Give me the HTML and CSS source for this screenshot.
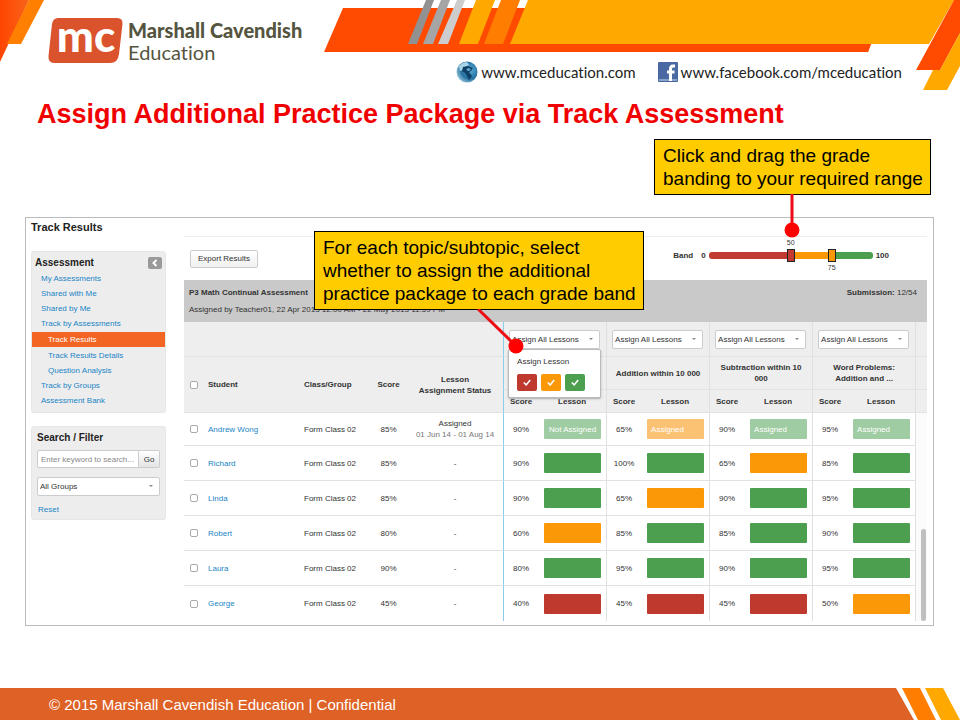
FILE: index.html
```html
<!DOCTYPE html>
<html lang="en">
<head>
<meta charset="utf-8">
<meta name="viewport" content="width=device-width, initial-scale=1">
<title>Assign Additional Practice Package via Track Assessment</title>
<link rel="stylesheet" href="styles.css">
</head>
<body>
<header class="masthead">
  <svg class="masthead-art" viewBox="0 0 960 96" preserveAspectRatio="none" aria-hidden="true">
    <defs>
      <linearGradient id="corner" x1="0" y1="0" x2="1" y2="0"><stop offset="0" stop-color="#ff4500"/><stop offset="1" stop-color="#f8641c"/></linearGradient>
    </defs>
    <path fill="url(#corner)" d="M0 0H29L0 62Z"/>
    <path fill="#ff8000" d="M29 0H44L21 44H7Z"/>
    <path fill="#ff4b00" d="M343 8H540L871 44L868 52H324Z"/>
    <path fill="#ff4b00" d="M500 44H871L868 52H500Z"/>
    <path fill="#fff" d="M460 0H530L526 8H460Z"/>
    <path fill="#919191" d="M426 0H434L417 44H408Z"/>
    <path fill="#a5a5a5" d="M441 0H450L433 44H423Z"/>
    <path fill="#cdcdcd" d="M457 0H465L448 44H438Z"/>
    <path fill="#ffa800" d="M476 0H495L478 44H459Z"/>
    <path fill="#ff7d00" d="M501 0H520L503 44H484Z"/>
    <path fill="#ffa800" d="M528 0H954L929 44H510Z"/>
    <path fill="#ff4b00" d="M954 0H960V33L940 70H916Z"/>
    <path fill="#ffa800" d="M960 33V66L947 90H923L933 70H940Z"/>
  </svg>
  <div class="brand">
    <svg class="brand-mark" viewBox="0 0 75 45" role="img" aria-label="mc">
      <path fill="#da532c" d="M10 0H69Q75 0 74.500 6L71 36Q70 45 62 45H6Q0 45 .5 38L4 6Q5 0 10 0Z"/>
      <text x="38" y="34" text-anchor="middle" class="mark-text">mc</text>
    </svg>
    <div class="brand-name"><strong>Marshall Cavendish</strong><span>Education</span></div>
  </div>
  <nav class="links" aria-label="Websites">
    <a href="#web"><svg viewBox="0 0 22 22" class="link-icon" aria-hidden="true">
      <defs><radialGradient id="globe" cx=".65" cy=".4" r=".7"><stop offset="0" stop-color="#5db1dc"/><stop offset=".6" stop-color="#246f9f"/><stop offset="1" stop-color="#9ccbe2"/></radialGradient></defs>
      <circle cx="11" cy="11" r="10.500" fill="url(#globe)"/>
      <path fill="#a9d3e6" d="M3 5Q7 1 11 1L13 4L9 6L7 9L4 10Z"/>
      <path fill="#103f66" d="M7 6L12 5L17 7L15 10L13 11L16 15L13 19L11 15L9 12L6 10Z"/>
      <path fill="#64b2d9" d="M12 7L15 8L13 10L10 9Z"/>
    </svg>www.mceducation.com</a>
    <a href="#facebook"><svg viewBox="0 0 20 20" class="link-icon fb" aria-hidden="true">
      <rect width="20" height="20" rx="1" fill="#4a69a3"/><path fill="#8ba2ca" d="M1 17H19V19H1Z"/>
      <path fill="none" stroke="#fff" stroke-width="3" d="M17 4H15Q12.500 4 12.500 7V19M9 10H16.500"/>
    </svg>www.facebook.com/mceducation</a>
  </nav>
</header>

<main class="slide">
  <h1>Assign Additional Practice Package via Track Assessment</h1>

  <section class="shot">
    <aside class="side">
      <h2>Track Results</h2>
      <nav class="panel menu" aria-label="Assessment">
        <div class="menu-head"><h3>Assessment</h3>
          <button type="button" class="collapse" aria-label="Collapse menu"><svg viewBox="0 0 8 8" aria-hidden="true"><path d="M5.500 1L2.500 4L5.500 7" fill="none" stroke="#fff" stroke-width="2"/></svg></button></div>
        <ul>
          <li><a href="#my">My Assessments</a></li>
          <li><a href="#with">Shared with Me</a></li>
          <li><a href="#by">Shared by Me</a></li>
          <li><a href="#track">Track by Assessments</a></li>
          <li class="sub active"><a href="#results" aria-current="page">Track Results</a></li>
          <li class="sub"><a href="#details">Track Results Details</a></li>
          <li class="sub"><a href="#analysis">Question Analysis</a></li>
          <li><a href="#groups">Track by Groups</a></li>
          <li><a href="#bank">Assessment Bank</a></li>
        </ul>
      </nav>
      <form class="panel filter">
        <h3><label for="keyword">Search / Filter</label></h3>
        <div class="search"><input id="keyword" type="text" placeholder="Enter keyword to search..."><button type="button">Go</button></div>
        <div class="pick"><select aria-label="Group"><option>All Groups</option></select></div>
        <a href="#reset">Reset</a>
      </form>
    </aside>

    <div class="results">
      <div class="toolbar">
        <button type="button" class="export">Export Results</button>
        <div class="band">
          <span class="band-label">Band</span><span>0</span>
          <div class="range">
            <input type="range" class="low" min="0" max="100" value="50" aria-label="Lower grade band">
            <input type="range" class="high" min="0" max="100" value="75" aria-label="Upper grade band">
            <output class="tick-low">50</output><output class="tick-high">75</output>
          </div>
          <span>100</span>
        </div>
      </div>
      <div class="summary">
        <div><strong>P3 Math Continual Assessment</strong><p>Assigned by Teacher01, 22 Apr 2013 12:00 AM - 22 May 2013 11:59 PM</p></div>
        <p><strong>Submission:</strong> 12/54</p>
      </div>
      <table>
        <colgroup><col class="c-check"><col class="c-name"><col class="c-class"><col class="c-total"><col class="c-status"><col class="c-score"><col class="c-lesson"><col class="c-score"><col class="c-lesson"><col class="c-score"><col class="c-lesson"><col class="c-score"><col class="c-lesson"><col class="c-scroll"></colgroup>
        <thead>
          <tr class="assign">
            <td colspan="5"></td>
            <td colspan="2" class="first topic"><div class="pick"><select aria-label="Assign lessons, topic 1"><option>Assign All Lessons</option></select></div>
              <div class="popup"><p>Assign Lesson</p><div class="checks">
                <button type="button" class="red" aria-label="Red band"><svg viewBox="0 0 10 8"><path d="M1 4L4 7L9 1"/></svg></button>
                <button type="button" class="orange" aria-label="Orange band"><svg viewBox="0 0 10 8"><path d="M1 4L4 7L9 1"/></svg></button>
                <button type="button" class="green" aria-label="Green band"><svg viewBox="0 0 10 8"><path d="M1 4L4 7L9 1"/></svg></button>
              </div></div></td>
            <td colspan="2" class="topic"><div class="pick"><select aria-label="Assign lessons, Addition"><option>Assign All Lessons</option></select></div></td>
            <td colspan="2" class="topic"><div class="pick"><select aria-label="Assign lessons, Subtraction"><option>Assign All Lessons</option></select></div></td>
            <td colspan="2" class="topic"><div class="pick"><select aria-label="Assign lessons, Word Problems"><option>Assign All Lessons</option></select></div></td>
            <td class="topic"></td>
          </tr>
          <tr class="topics">
            <th rowspan="2"><input type="checkbox" aria-label="Select all"></th>
            <th rowspan="2" class="left">Student</th><th rowspan="2" class="left">Class/Group</th><th rowspan="2">Score</th><th rowspan="2">Lesson<br>Assignment Status</th>
            <th colspan="2" class="first topic"></th>
            <th colspan="2" class="topic">Addition within 10 000</th>
            <th colspan="2" class="topic">Subtraction within 10 000</th>
            <th colspan="2" class="topic">Word Problems: Addition and ...</th>
            <th class="topic"></th>
          </tr>
          <tr class="subheads">
            <th class="first topic">Score</th><th>Lesson</th><th class="topic">Score</th><th>Lesson</th><th class="topic">Score</th><th>Lesson</th><th class="topic">Score</th><th>Lesson</th><th class="topic"></th>
          </tr>
        </thead>
        <tbody>
          <tr><td><input type="checkbox" aria-label="Select Andrew Wong"></td><td class="left"><a href="#s1">Andrew Wong</a></td><td class="left">Form Class 02</td><td>85%</td><td>Assigned<br><span class="dates">01 Jun 14 - 01 Aug 14</span></td>
            <td class="first topic">90%</td><td><span class="bar green pale mid">Not Assigned</span></td><td class="topic">65%</td><td><span class="bar orange pale">Assigned</span></td><td class="topic">90%</td><td><span class="bar green pale">Assigned</span></td><td class="topic">95%</td><td><span class="bar green pale">Assigned</span></td>
            <td rowspan="6" class="scroll topic"><div class="thumb"></div></td></tr>
          <tr><td><input type="checkbox" aria-label="Select Richard"></td><td class="left"><a href="#s2">Richard</a></td><td class="left">Form Class 02</td><td>85%</td><td>-</td>
            <td class="first topic">90%</td><td><span class="bar green"></span></td><td class="topic">100%</td><td><span class="bar green"></span></td><td class="topic">65%</td><td><span class="bar orange"></span></td><td class="topic">85%</td><td><span class="bar green"></span></td></tr>
          <tr><td><input type="checkbox" aria-label="Select Linda"></td><td class="left"><a href="#s3">Linda</a></td><td class="left">Form Class 02</td><td>85%</td><td>-</td>
            <td class="first topic">90%</td><td><span class="bar green"></span></td><td class="topic">65%</td><td><span class="bar orange"></span></td><td class="topic">90%</td><td><span class="bar green"></span></td><td class="topic">95%</td><td><span class="bar green"></span></td></tr>
          <tr><td><input type="checkbox" aria-label="Select Robert"></td><td class="left"><a href="#s4">Robert</a></td><td class="left">Form Class 02</td><td>80%</td><td>-</td>
            <td class="first topic">60%</td><td><span class="bar orange"></span></td><td class="topic">85%</td><td><span class="bar green"></span></td><td class="topic">85%</td><td><span class="bar green"></span></td><td class="topic">90%</td><td><span class="bar green"></span></td></tr>
          <tr><td><input type="checkbox" aria-label="Select Laura"></td><td class="left"><a href="#s5">Laura</a></td><td class="left">Form Class 02</td><td>90%</td><td>-</td>
            <td class="first topic">80%</td><td><span class="bar green"></span></td><td class="topic">95%</td><td><span class="bar green"></span></td><td class="topic">90%</td><td><span class="bar green"></span></td><td class="topic">95%</td><td><span class="bar green"></span></td></tr>
          <tr><td><input type="checkbox" aria-label="Select George"></td><td class="left"><a href="#s6">George</a></td><td class="left">Form Class 02</td><td>45%</td><td>-</td>
            <td class="first topic">40%</td><td><span class="bar red"></span></td><td class="topic">45%</td><td><span class="bar red"></span></td><td class="topic">45%</td><td><span class="bar red"></span></td><td class="topic">50%</td><td><span class="bar orange"></span></td></tr>
        </tbody>
      </table>
    </div>

    <div class="callout callout-band">Click and drag the grade<br>banding to your required range
      <svg class="pointer" viewBox="0 0 16 44" aria-hidden="true"><path d="M8 0V37" stroke="#ed0c14" stroke-width="3"/><circle cx="8" cy="36" r="7.500" fill="#f00"/></svg></div>
    <div class="callout callout-topic">For each topic/subtopic, select<br>whether to assign the additional<br>practice package to each grade band
      <svg class="pointer" viewBox="0 0 48 45" aria-hidden="true"><path d="M2 0L40 37" stroke="#ed0c14" stroke-width="3"/><circle cx="40" cy="37" r="7.500" fill="#f00"/></svg></div>
  </section>
</main>

<footer class="foot">
  <p>© 2015 Marshall Cavendish Education | Confidential</p>
  <svg viewBox="0 0 64 32" aria-hidden="true"><path fill="#fff" d="M0 0H64V32H18Z"/><path fill="#ff7d00" d="M6 0H24L40 32H22Z"/><path fill="#ffa800" d="M29 0H47L64 32H45Z"/></svg>
</footer>
</body>
</html>
```
FILE: styles.css
```css
* { box-sizing: border-box; }
body {
  margin: 0;
  min-height: 100vh;
  display: flex;
  flex-direction: column;
  background: #fff;
  color: #333;
  font-family: "Liberation Sans", Arial, sans-serif;
}
h1, h2, h3, p, ul { margin: 0; padding: 0; }
ul { list-style: none; }
a { color: #1a85c6; text-decoration: none; }
button, input, select { font: inherit; color: inherit; margin: 0; }

/* Masthead */
.masthead {
  position: relative;
  height: 96px;
  display: flex;
  justify-content: space-between;
  padding: 18px 58px 12px 48px;
  font-variant-ligatures: none;
}
.masthead-art { position: absolute; inset: 0; width: 100%; height: 96px; }
.brand, .links { position: relative; display: flex; }
.brand { align-items: flex-start; gap: 5px; }
.brand-mark { width: 75px; height: 45px; overflow: visible; }
.mark-text { font-family: Lato, sans-serif; font-size: 44px; font-weight: 900; fill: #fff; }
.brand-name { display: flex; flex-direction: column; font-family: Lato, sans-serif; font-size: 20px; line-height: 22px; color: #55553f; padding-top: 1px; }
.brand-name strong { font-weight: 900; }
.links { align-self: flex-end; gap: 22px; }
.links a { display: flex; align-items: center; gap: 3px; font-family: Lato, sans-serif; font-size: 15px; line-height: 24px; color: #222; }
.link-icon { width: 22px; height: 22px; }
.link-icon.fb { width: 20px; height: 20px; }

/* Slide */
.slide { flex: 1; padding: 0 26px 24px 25px; }
h1 { padding-left: 12px; font-size: 27px; line-height: 36px; color: #f00000; }
.shot {
  position: relative;
  margin-top: 85px;
  border: 1px solid #bbb;
  padding: 0 6px 4px 5px;
  display: grid;
  grid-template-columns: 135px minmax(0, 1fr);
  gap: 18px;
  font-size: 8px;
  line-height: 11px;
}

/* Sidebar */
h2 { font-size: 11px; line-height: 19px; margin-bottom: 14px; color: #222; }
h3 { font-size: 10px; line-height: 14px; color: #222; }
.panel { background: #ededed; border: 1px solid #e6e6e6; border-radius: 3px; }
.menu { padding-bottom: 4px; margin-bottom: 13px; }
.menu-head { display: flex; justify-content: space-between; align-items: center; padding: 4px 3px 1px; }
.collapse { width: 14px; height: 12px; padding: 0; border: 0; border-radius: 2px; background: #999; display: grid; place-items: center; }
.collapse svg { width: 8px; height: 8px; }
.menu li { line-height: 15px; padding-left: 9px; }
.menu .sub { padding-left: 16px; }
.menu .active { margin: 1px 0; background: #f26522; }
.menu .active a { color: #fff; }
.filter { padding: 4px 5px 3px; display: flex; flex-direction: column; }
.search { display: flex; margin: 5px 0 9px; }
.search input { flex: 1; min-width: 0; height: 18px; border: 1px solid #ccc; border-radius: 2px 0 0 2px; padding: 0 3px; background: #fff; }
.search input::placeholder { color: #888; }
.search button { width: 21px; padding: 0; border: 1px solid #ccc; border-left: 0; border-radius: 0 2px 2px 0; background: linear-gradient(#fff, #e4e4e4); }
.pick { position: relative; }
.pick select { display: block; width: 100%; height: 19px; padding: 0 2px; border: 1px solid #ccc; border-radius: 2px; background: #fff; appearance: none; }
.pick::after { content: ""; position: absolute; right: 7px; top: 8px; border: 2px solid transparent; border-top-color: #888; }
.filter > a { padding: 8px 1px 1px; }

/* Results */
.results { margin-top: 18px; border-top: 1px solid #eee; }
.toolbar { height: 43px; display: flex; justify-content: space-between; align-items: center; padding: 0 38px 0 6px; }
.export { height: 18px; padding: 0 7px; border: 1px solid #ccc; border-radius: 2px; background: linear-gradient(#fff, #f0f0f0); }
.band { display: flex; align-items: center; gap: 3px; margin-top: -6px; font-weight: bold; }
.band-label { margin-right: 5px; }
.range { position: relative; width: 164px; height: 7px; border-radius: 3px; background: linear-gradient(90deg, #c23b30 50%, #fb9807 50% 75%, #4b9f4f 75%); }
.range input { position: absolute; left: -4px; top: -3px; width: 172px; height: 13px; background: none; appearance: none; pointer-events: none; }
.range input::-webkit-slider-thumb { appearance: none; pointer-events: auto; width: 8px; height: 13px; border: 1px solid #222; background: #c23b30; }
.range .high::-webkit-slider-thumb { background: #fb9807; }
.range output { position: absolute; font-size: 7px; line-height: 8px; font-weight: normal; transform: translateX(-50%); }
.tick-low { left: 50%; bottom: 12px; }
.tick-high { left: 75%; top: 12px; }
.summary { height: 42px; display: flex; justify-content: space-between; background: #c9c9c9; padding: 7px 10px 0 5px; }
.summary div p { margin-top: 6px; }

table { width: 100%; table-layout: fixed; border-collapse: separate; border-spacing: 0; text-align: center; }
.c-check { width: 20px; }
.c-name, .c-status { width: 96px; }
.c-class { width: 70px; }
.c-total { width: 37px; }
.c-score { width: 35px; }
.c-lesson { width: 68px; }
.c-scroll { width: 12px; }
th, td { padding: 0; border-bottom: 1px solid #e2e2e2; }
thead { background: #eee; }
.left { text-align: left; padding-left: 4px; }
.topic { border-left: 1px solid #e0e0e0; }
.first { border-left: 1px solid #8ccbf0; }
.assign td { height: 35px; padding: 0 6px 0 5px; text-align: left; }
.topics th { height: 33px; }
.topics .topic { padding: 0 6px; }
.subheads th { height: 23px; }
tbody td { height: 35px; }
tbody tr:first-child td { height: 33px; }
tbody tr:last-child td, .scroll { border-bottom: 0; }
input[type="checkbox"] { display: block; width: 8px; height: 8px; margin: 0 auto; border: 1px solid #aaa; border-radius: 2px; background: #fff; appearance: none; }
.dates { color: #777; }
.bar { display: flex; align-items: center; height: 20px; margin: 0 5px 0 6px; padding: 0 4px; border-radius: 1px; color: #fff; }
.mid { justify-content: center; padding: 0; }
.red { background: #bf392f; }
.orange { background: #fb9807; }
.green { background: #4b9f4f; }
.orange.pale { background: #fcc274; }
.green.pale { background: #9fcca2; }
.scroll { vertical-align: bottom; background: #fbfbfb; }
.thumb { width: 5px; height: 92px; margin-left: 5px; border-radius: 3px; background: #bfbfbf; }

.assign .topic { position: relative; }
.popup { position: absolute; z-index: 1; left: 4px; top: 27px; width: 93px; height: 49px; padding: 6px 8px; background: #fff; border: 1px solid #bbb; border-radius: 2px; box-shadow: 0 1px 2px #aaa; }
.checks { display: flex; gap: 4px; margin-top: 7px; }
.checks button { width: 20px; height: 17px; padding: 0; border: 0; border-radius: 2px; display: grid; place-items: center; }
.checks svg { width: 8px; height: 7px; fill: none; stroke: #fff; stroke-width: 2; }

/* Annotations */
.callout { position: absolute; z-index: 2; background: #fc0; border: 1px solid #000; color: #000; font-size: 19px; line-height: 23px; padding: 4px 8px; white-space: nowrap; }
.callout-band { right: 2px; top: -79px; width: 277px; }
.callout-topic { left: 288px; top: 13px; width: 330px; }
.pointer { position: absolute; top: 100%; }
.callout-band .pointer { left: 129px; width: 16px; height: 44px; }
.callout-topic .pointer { left: 161px; width: 48px; height: 45px; }

/* Footer */
.foot { height: 32px; display: flex; justify-content: space-between; background: #de6126; color: #fff; font-size: 15px; line-height: 34px; padding-left: 49px; }
.foot svg { width: 64px; height: 32px; }
```
